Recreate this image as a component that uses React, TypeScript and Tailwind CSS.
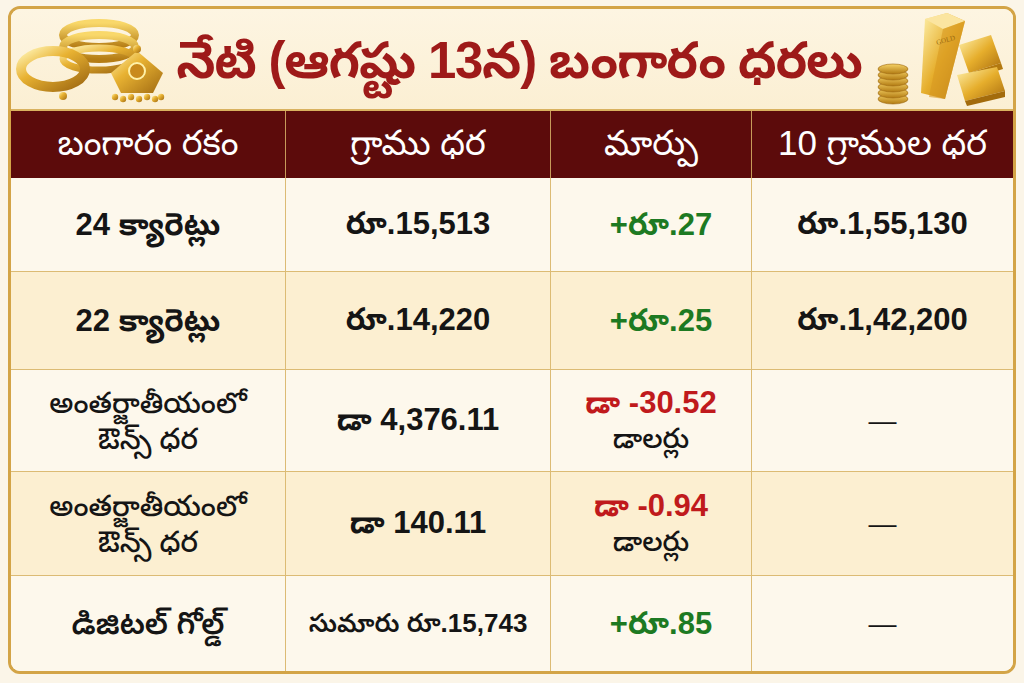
import React from "react";

const font = { fontFamily: '"Liberation Sans", "Noto Sans Telugu", "Noto Sans", sans-serif' };

function Jewelry() {
  return (
    <svg width="156" height="92" viewBox="0 0 156 92" className="shrink-0">
      <defs>
        <linearGradient id="g1" x1="0" y1="0" x2="1" y2="1">
          <stop offset="0" stopColor="#fff2b0" />
          <stop offset="0.4" stopColor="#e8b232" />
          <stop offset="1" stopColor="#a06a12" />
        </linearGradient>
        <linearGradient id="g1b" x1="0" y1="0" x2="0" y2="1">
          <stop offset="0" stopColor="#f9d86a" />
          <stop offset="1" stopColor="#b57d15" />
        </linearGradient>
      </defs>
      {/* back bangles, stacked */}
      <ellipse cx="84" cy="22" rx="36" ry="12" fill="none" stroke="url(#g1b)" strokeWidth="8" />
      <ellipse cx="84" cy="34" rx="36" ry="12" fill="none" stroke="url(#g1b)" strokeWidth="8" />
      <ellipse cx="84" cy="46" rx="36" ry="11" fill="none" stroke="url(#g1)" strokeWidth="7" />
      {/* front bangle */}
      <ellipse cx="38" cy="56" rx="32" ry="18" fill="none" stroke="url(#g1)" strokeWidth="10" />
      <circle cx="48" cy="83" r="4" fill="url(#g1)" />
      {/* pendant */}
      <path d="M122 38 L148 60 L138 80 L106 80 L96 60 Z" fill="url(#g1)" />
      <circle cx="122" cy="58" r="8" fill="#c98a1c" stroke="#fff1a8" strokeWidth="2" />
      <circle cx="122" cy="36" r="4" fill="url(#g1)" />
      {[100, 108, 116, 124, 132, 140, 146].map((x, i) => (
        <circle key={x} cx={x} cy={i % 2 ? 86 : 84} r="3.2" fill="url(#g1)" />
      ))}
    </svg>
  );
}

function GoldBars() {
  return (
    <svg width="134" height="96" viewBox="0 0 134 96" className="shrink-0">
      <defs>
        <linearGradient id="g2" x1="0" y1="0" x2="1" y2="1">
          <stop offset="0" stopColor="#fff3b0" />
          <stop offset="0.5" stopColor="#e6ae2c" />
          <stop offset="1" stopColor="#a86c0e" />
        </linearGradient>
        <linearGradient id="g3" x1="0" y1="0" x2="0" y2="1">
          <stop offset="0" stopColor="#f6d266" />
          <stop offset="1" stopColor="#b17a12" />
        </linearGradient>
      </defs>
      {/* bars behind */}
      <path d="M86 34 L118 24 L128 52 L96 62 Z" fill="url(#g2)" />
      <path d="M96 62 L128 52 L130 58 L98 68 Z" fill="#b3790f" />
      <path d="M84 64 L124 56 L132 80 L92 90 Z" fill="url(#g2)" />
      <path d="M92 90 L132 80 L132 86 L94 95 Z" fill="#a36b0c" />
      {/* main bar */}
      <path d="M52 8 L74 2 L92 10 L72 88 L48 82 Z" fill="url(#g2)" />
      <path d="M52 8 L74 2 L92 10 L70 18 Z" fill="#fbe5a0" />
      <path d="M70 18 L92 10 L72 88 L56 86 Z" fill="#d89a22" opacity="0.6" />
      <text x="64" y="34" fontSize="7" fill="#9c6c12" fontFamily="Liberation Serif" transform="rotate(-16 64 34)">GOLD</text>
      {[0, 1, 2, 3, 4, 5].map((i) => (
        <ellipse key={i} cx="20" cy={88 - i * 6} rx="15" ry="5" fill="url(#g3)" stroke="#9a650f" strokeWidth="0.6" />
      ))}
    </svg>
  );
}

const rows = [
  { type: ["24 క్యారెట్లు"], gram: "రూ.15,513", change: "+రూ.27", up: true, ten: "రూ.1,55,130", warm: false },
  { type: ["22 క్యారెట్లు"], gram: "రూ.14,220", change: "+రూ.25", up: true, ten: "రూ.1,42,200", warm: true },
  { type: ["అంతర్జాతీయంలో", "ఔన్స్ ధర"], gram: "డా 4,376.11", change: "డా -30.52", sub: "డాలర్లు", up: false, ten: "—", warm: false },
  { type: ["అంతర్జాతీయంలో", "ఔన్స్ ధర"], gram: "డా 140.11", change: "డా -0.94", sub: "డాలర్లు", up: false, ten: "—", warm: true },
  { type: ["డిజిటల్ గోల్డ్"], gram: "సుమారు రూ.15,743", change: "+రూ.85", up: true, ten: "—", warm: false, soft: true },
];

const heights = ["h-[94px]", "h-[98px]", "h-[102px]", "h-[104px]", "h-[96px]"];

export default function App() {
  return (
    <div className="w-[1024px] h-[683px] bg-[#fbf5e8] p-[6px_8px_9px_8px]" style={font}>
      <div className="h-full rounded-[12px] border-[3px] border-[#d3a447] overflow-hidden flex flex-col bg-[#fdf6e6]">
        {/* Title */}
        <div className="h-[102px] flex items-center justify-between pl-[4px] pr-[6px] bg-gradient-to-b from-[#fdf5e2] to-[#fbefd3] border-b-[2px] border-[#d9b260]">
          <Jewelry />
          <h1 className="text-[51px] font-bold text-[#9e1a19] leading-none tracking-tight whitespace-nowrap shrink-0 pt-[2px] pr-[6px]">
            నేటి (ఆగష్టు 13న) బంగారం ధరలు
          </h1>
          <GoldBars />
        </div>

        {/* Header */}
        <div className="grid grid-cols-[275px_265px_201px_1fr] h-[67px] bg-[#5c0b0b] text-white text-[35px] leading-none">
          {["బంగారం రకం", "గ్రాము ధర", "మార్పు", "10 గ్రాముల ధర"].map((h, i) => (
            <div key={h} className={`flex items-center justify-center pb-[4px] ${i < 3 ? "border-r border-[#c79a5a]" : ""}`}>
              {h}
            </div>
          ))}
        </div>

        {/* Body */}
        <div className="flex-1 flex flex-col">
          {rows.map((r, ri) => (
            <div
              key={ri}
              className={`grid grid-cols-[275px_265px_201px_1fr] ${heights[ri]} ${ri < rows.length - 1 ? "border-b" : "flex-1"} border-[#dcbb74] ${r.warm ? "bg-[#fcefd1]" : "bg-[#fdf8ec]"} text-[#151515]`}
            >
              <div className="flex flex-col items-center justify-center border-r border-[#dcbb74] leading-[36px]">
                {r.type.map((t, ti) => (
                  <span key={ti} className={r.type.length > 1 ? "text-[29px] font-medium" : r.soft ? "text-[31px] font-semibold" : "text-[31px] font-bold"}>{t}</span>
                ))}
              </div>
              <div className={`flex items-center justify-center border-r border-[#dcbb74] ${r.gram.length > 12 ? "text-[26px] font-semibold" : "text-[31px] font-bold"}`}>
                {r.gram}
              </div>
              <div className="flex flex-col items-center justify-center border-r border-[#dcbb74] leading-[36px]">
                <span className={`text-[31px] font-bold ${r.up ? "text-[#1d7a22] pl-[20px]" : "text-[#c01a1c]"}`}>{r.change}</span>
                {r.sub && <span className="text-[28px] font-medium text-[#151515]">{r.sub}</span>}
              </div>
              <div className={`flex items-center justify-center ${r.ten === "—" ? "text-[28px] font-normal" : "text-[31px] font-bold"}`}>
                {r.ten}
              </div>
            </div>
          ))}
        </div>
      </div>
    </div>
  );
}
